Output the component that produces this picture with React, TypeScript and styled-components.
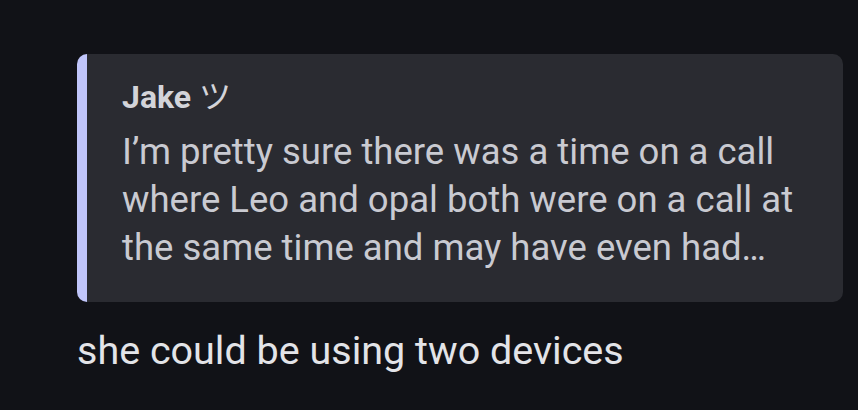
import React from "react";
import styled, { createGlobalStyle } from "styled-components";

const Global = createGlobalStyle`
  html, body { margin: 0; padding: 0; background: #111217; }
  body { font-family: Roboto, "Noto Sans", sans-serif; -webkit-font-smoothing: antialiased; }
`;

const Page = styled.div`
  width: 858px;
  height: 410px;
  box-sizing: border-box;
  padding: 54px 15px 0 77px;
  background: #111217;
  display: flex;
  flex-direction: column;
`;

const Quote = styled.div`
  box-sizing: border-box;
  width: 766px;
  height: 248px;
  background: #2a2b31;
  border-left: 10px solid #c0c5fa;
  border-radius: 10px;
  padding: 24px 20px 0 35px;
  display: flex;
  flex-direction: column;
`;

const Author = styled.div`
  font-family: Roboto, "Noto Sans CJK JP", sans-serif;
  font-weight: 700;
  font-size: 32px;
  line-height: 38px;
  margin-bottom: 12px;
  color: #d3d4d9;
`;

const Kana = styled.span`
  font-weight: 400;
`;

const Excerpt = styled.div`
  font-size: 36.5px;
  line-height: 48px;
  color: #c9cad1;
  white-space: nowrap;
`;

const Message = styled.div`
  margin-top: 26px;
  font-size: 39.5px;
  line-height: 46px;
  color: #e3e4e8;
  white-space: nowrap;
`;

export default function App() {
  return (
    <>
      <Global />
      <Page>
        <Quote>
          <Author>
            Jake <Kana>ツ</Kana>
          </Author>
          <Excerpt>
            I’m pretty sure there was a time on a call
            <br />
            where Leo and opal both were on a call at
            <br />
            the same time and may have even had…
          </Excerpt>
        </Quote>
        <Message>she could be using two devices</Message>
      </Page>
    </>
  );
}
